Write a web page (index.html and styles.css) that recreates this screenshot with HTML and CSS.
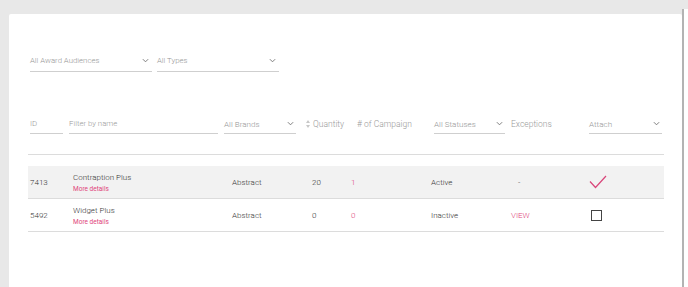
FILE: index.html
```html
<!DOCTYPE html>
<html lang="en">
<head>
    <meta charset="UTF-8">
    <title>Awards</title>
    <link rel="stylesheet" href="styles.css">
</head>
<body>
    <div class="card">
        <div class="top-filters">
            <div class="select wide">
                <span>All Award Audiences</span>
                <svg class="chev" viewBox="0 0 8 5"><path d="M1 1 L4 4 L7 1"/></svg>
            </div>
            <div class="select wide">
                <span>All Types</span>
                <svg class="chev" viewBox="0 0 8 5"><path d="M1 1 L4 4 L7 1"/></svg>
            </div>
        </div>

        <div class="table">
            <div class="head grid">
                <div class="h-id"><div class="field"><span>ID</span></div></div>
                <div class="h-name"><div class="field"><span>Filter by name</span></div></div>
                <div class="h-brand">
                    <div class="select">
                        <span>All Brands</span>
                        <svg class="chev" viewBox="0 0 8 5"><path d="M1 1 L4 4 L7 1"/></svg>
                    </div>
                </div>
                <div class="h-qty">
                    <svg class="sort" viewBox="0 0 4 8"><path d="M2 0 L4 3 L0 3 Z M2 8 L4 5 L0 5 Z"/></svg>
                    <span>Quantity</span>
                </div>
                <div class="h-camp"><span># of Campaign</span></div>
                <div class="h-status">
                    <div class="select">
                        <span>All Statuses</span>
                        <svg class="chev" viewBox="0 0 8 5"><path d="M1 1 L4 4 L7 1"/></svg>
                    </div>
                </div>
                <div class="h-exc"><span>Exceptions</span></div>
                <div class="h-attach">
                    <div class="select">
                        <span>Attach</span>
                        <svg class="chev" viewBox="0 0 8 5"><path d="M1 1 L4 4 L7 1"/></svg>
                    </div>
                </div>
            </div>

            <div class="rows">
                <div class="row grid selected">
                    <div class="c-id">7413</div>
                    <div class="c-name">
                        <div>Contraption Plus</div>
                        <a class="more">More details</a>
                    </div>
                    <div class="c-brand">Abstract</div>
                    <div class="c-qty">20</div>
                    <div class="c-camp pink">1</div>
                    <div class="c-status">Active</div>
                    <div class="c-exc dash">-</div>
                    <div class="c-attach">
                        <svg class="check" viewBox="0 0 18 14"><path d="M1 6.5 L6.5 12.5 L17 1"/></svg>
                    </div>
                </div>
                <div class="row grid">
                    <div class="c-id">5492</div>
                    <div class="c-name">
                        <div>Widget Plus</div>
                        <a class="more">More details</a>
                    </div>
                    <div class="c-brand">Abstract</div>
                    <div class="c-qty">0</div>
                    <div class="c-camp pink">0</div>
                    <div class="c-status">Inactive</div>
                    <div class="c-exc"><a class="view">VIEW</a></div>
                    <div class="c-attach"><span class="box"></span></div>
                </div>
            </div>
        </div>
    </div>
    <div class="strip"></div>
</body>
</html>
```

FILE: styles.css
```css
body {
    margin: 0;
    background: #e8e8e8;
    font-family: Roboto, "Liberation Sans", sans-serif;
    display: flex;
    height: 100vh;
    overflow: hidden;
    color: #4a4a4a;
}

.card {
    margin: 14px 0 0 9px;
    width: 673px;
    background: #fff;
    border-radius: 2px 2px 0 0;
    padding: 36px 0 0 19px;
    box-sizing: border-box;
}

.strip {
    margin-top: 9px;
    flex: 1;
    background: #fff;
    border-left: 2px solid #b3b3b3;
}

.top-filters {
    display: flex;
    gap: 5px;
    padding-left: 2px;
}

.select {
    display: flex;
    align-items: center;
    justify-content: space-between;
    height: 21px;
    border-bottom: 1px solid #cfcfcf;
    font-size: 7.8px;
    font-weight: 300;
    color: #959595;
    padding-right: 3px;
}

    .select.wide {
        width: 119px;
    }

.chev {
    width: 7px;
    height: 5px;
    fill: none;
    stroke: #7a7a7a;
    stroke-width: 1.1;
}

.table {
    width: 636px;
    margin-top: 42px;
}

.grid {
    display: grid;
    grid-template-columns: 38px 156px 78px 50px 80px 78px 78px 78px;
    align-items: center;
}

.head {
    height: 40px;
    border-bottom: 1px solid #dcdcdc;
    align-items: start;
    font-size: 8.5px;
    font-weight: 300;
    color: #9a9a9a;
}

    .head > div {
        height: 20px;
        display: flex;
        align-items: center;
    }

.field {
    height: 20px;
    width: 100%;
    display: flex;
    align-items: center;
    border-bottom: 1px solid #cfcfcf;
    box-sizing: border-box;
    font-size: 7.8px;
    color: #9a9a9a;
}

.h-id { padding: 0 3px 0 2px; }
.h-name { padding: 0 4px 0 3px; }
.h-brand { padding: 0 4px 0 2px; }
.h-qty { padding-left: 6px; gap: 3px; }
.h-camp { padding-left: 7px; }
.h-status { padding: 0 3px 0 4px; }
.h-exc { padding-left: 3px; }
.h-attach { padding: 0 2px 0 3px; }

.head .select {
    width: 100%;
    height: 20px;
    box-sizing: border-box;
    padding-right: 2px;
    font-size: 8.1px;
}

.sort {
    width: 4px;
    height: 8px;
    fill: #c8c8c8;
}

.rows {
    margin-top: 11px;
}

.row {
    height: 33px;
    box-sizing: border-box;
    border-bottom: 1px solid #dcdcdc;
    font-size: 8px;
    font-weight: 300;
    color: #333;
}

    .row.selected {
        background: #f2f2f2;
    }

.c-id { padding-left: 2px; }
.c-name { padding: 2px 0 0 7px; line-height: 11px; }
.c-brand { padding-left: 10px; }
.c-qty { padding-left: 12px; }
.c-camp { padding-left: 1px; }
.c-status { padding-left: 1px; }
.c-exc { padding-left: 3px; }
.dash { padding-left: 10px; }
.c-attach { padding-left: 3px; display: flex; }

.more {
    font-size: 6.5px;
    font-weight: 400;
    color: #e0457b;
}

.pink {
    color: #e0457b;
}

.view {
    color: #e0457b;
    font-size: 8px;
}

.check {
    width: 18px;
    height: 14px;
    fill: none;
    stroke: #d9467a;
    stroke-width: 1.2;
}

.box {
    width: 9px;
    height: 9px;
    margin-left: 2px;
    border: 1.5px solid #444;
}
```
